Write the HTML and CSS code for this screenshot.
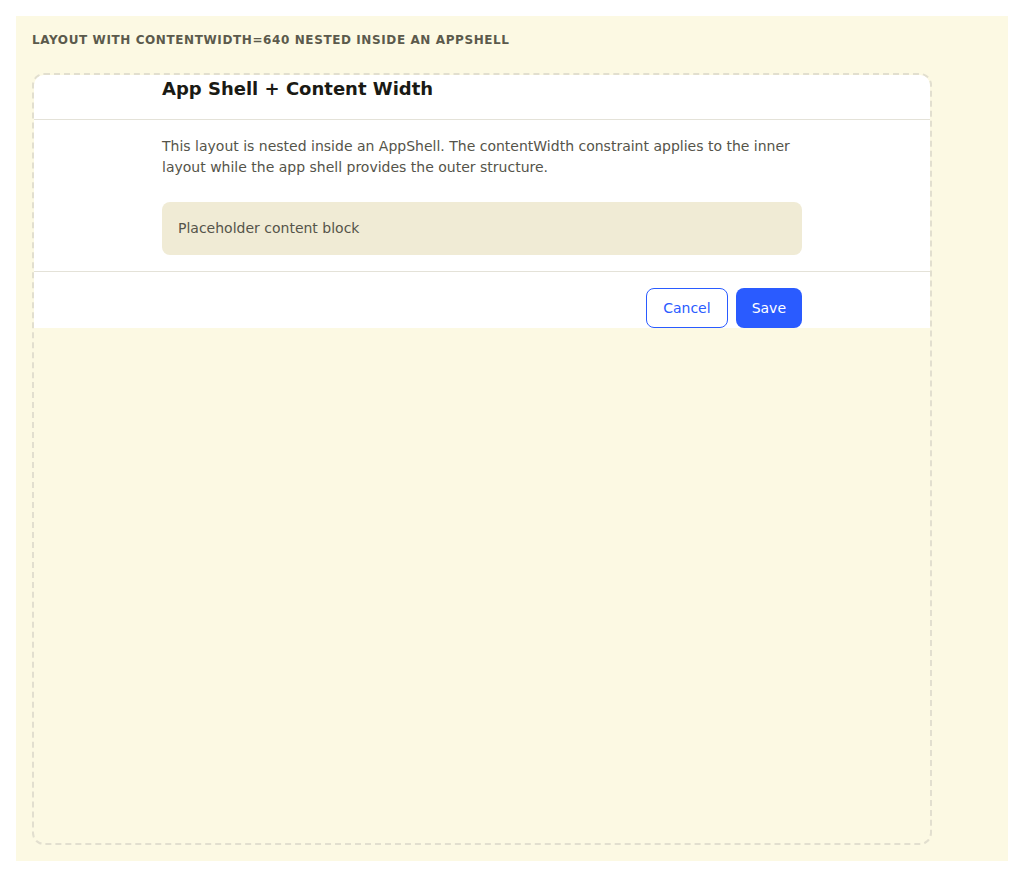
FILE: index.html
```html
<!DOCTYPE html>
<html>
<head lang="en">
    <meta charset="UTF-8">
    <title>Layout story</title>

    <link rel="stylesheet" href="styles.css">
</head>
<body>

<div class="story">
    <div class="story-label">Layout with contentWidth=640 nested inside an AppShell</div>

    <div class="story-frame">
        <div class="app-shell">
            <div class="layout-header">
                <div class="content-width">
                    <h1 class="layout-title">App Shell + Content Width</h1>
                </div>
            </div>

            <div class="layout-body">
                <div class="content-width">
                    <p class="layout-text">
                        This layout is nested inside an AppShell. The contentWidth constraint applies to the inner
                        layout while the app shell provides the outer structure.
                    </p>
                    <div class="placeholder">Placeholder content block</div>
                </div>
            </div>

            <div class="layout-footer">
                <div class="content-width actions">
                    <button class="btn btn-outline">Cancel</button>
                    <button class="btn btn-primary">Save</button>
                </div>
            </div>
        </div>
    </div>
</div>

</body>
</html>
```

FILE: styles.css
```css
body, html {
    padding: 0;
    margin: 0;
}

body {
    padding: 16px;
    height: 100vh;
    box-sizing: border-box;
    background: #fff;
    font-family: "DejaVu Sans", Verdana, sans-serif;
}

.story {
    height: 100%;
    box-sizing: border-box;
    padding: 16px;
    background: #fcf9e3;
    display: flex;
    flex-direction: column;
}

.story-label {
    font-size: 12px;
    font-weight: bold;
    letter-spacing: 0.05em;
    text-transform: uppercase;
    color: #5b5a4c;
    line-height: 17px;
    margin-bottom: 24px;
}

.story-frame {
    flex: 1;
    width: 900px;
    box-sizing: border-box;
    border: 2px dashed #e2dfcf;
    border-radius: 12px;
    overflow: hidden;
}

.app-shell {
    background: #fff;
}

.content-width {
    width: 640px;
    margin: 0 auto;
}

.layout-header {
    height: 44px;
    border-bottom: 1px solid #e4e2d8;
}

.layout-title {
    margin: 0;
    padding-top: 2px;
    font-size: 18px;
    line-height: 24px;
    color: #1a1a14;
}

.layout-body {
    padding: 16px 0;
    border-bottom: 1px solid #e4e2d8;
}

.layout-text {
    margin: 0 0 24px;
    font-size: 14px;
    line-height: 21px;
    color: #55544a;
}

.placeholder {
    background: #f0ebd5;
    border-radius: 8px;
    padding: 16px;
    font-size: 14px;
    line-height: 21px;
    color: #55544a;
}

.layout-footer {
    padding-top: 16px;
}

.actions {
    display: flex;
    justify-content: flex-end;
    gap: 8px;
}

.btn {
    height: 40px;
    padding: 0 16px;
    border-radius: 8px;
    font-family: inherit;
    font-size: 14px;
    cursor: pointer;
}

.btn-outline {
    background: #fff;
    border: 1px solid #2a5bff;
    color: #2a5bff;
}

.btn-primary {
    background: #2a5bff;
    border: none;
    color: #fff;
}
```
